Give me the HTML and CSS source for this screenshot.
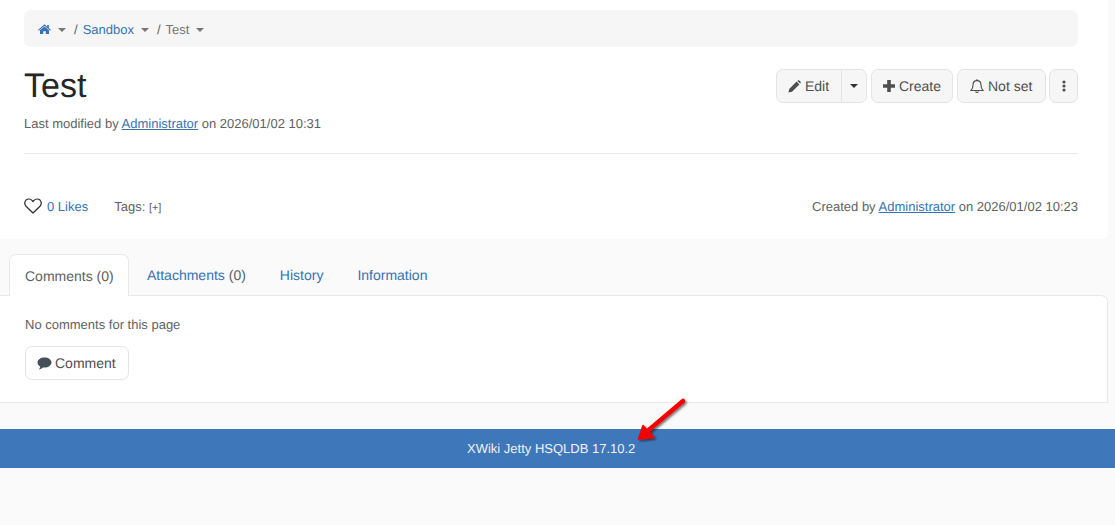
FILE: index.html
```html
<!DOCTYPE html>
<html lang="en">
<head>
<meta charset="utf-8">
<title>Test</title>
<link rel="stylesheet" href="styles.css">
</head>
<body>
<main class="page">
  <nav class="crumbs">
    <a class="crumb-link home" href="#"><svg class="home-icon" viewBox="0 0 13 10" width="13" height="10"><path d="M6.5 0.3 L9.2 2.7 V1 H10.8 V4.1 L13 6 L12.3 6.7 L6.5 1.8 L0.7 6.7 L0 6 Z M2 6.3 L6.5 2.6 L11 6.3 V10 H7.8 V7.2 H5.2 V10 H2 Z" fill="currentColor"/></svg></a>
    <span class="caret"></span><span class="sep">/</span>
    <a class="crumb-link" href="#">Sandbox</a>
    <span class="caret"></span><span class="sep">/</span>
    <span class="crumb-current">Test</span>
    <span class="caret"></span>
  </nav>
  <header class="title-row">
    <h1 class="title">Test</h1>
    <div class="actions">
      <div class="btn-group">
        <button class="btn btn-main"><svg class="icon" viewBox="0 0 13 13" width="13" height="13"><path d="M0.5 12.5 L1.2 9 L8.6 1.6 L11.4 4.4 L4 11.8 Z M9.4 0.9 L10.2 0.3 Q10.8 0 11.3 0.4 L12.6 1.7 Q13 2.2 12.7 2.8 L12.1 3.6 Z" fill="currentColor"/></svg>Edit</button>
        <button class="btn btn-split"><span class="caret dark"></span></button>
      </div>
      <button class="btn btn-create"><svg class="icon" viewBox="0 0 12 12" width="12" height="12"><path d="M4.2 0 H7.8 V4.2 H12 V7.8 H7.8 V12 H4.2 V7.8 H0 V4.2 H4.2 Z" fill="currentColor"/></svg>Create</button>
      <button class="btn btn-watch"><svg class="icon" viewBox="0 0 14 15" width="14" height="15"><path d="M1 11.5 C2.6 9.8 3 8.5 3 6 C3 3.4 4.8 1.6 7 1.6 C9.2 1.6 11 3.4 11 6 C11 8.5 11.4 9.8 13 11.5 Z M5.6 12.5 A1.5 1.5 0 0 0 8.4 12.5" fill="none" stroke="currentColor" stroke-width="1.1"/><circle cx="7" cy="1.2" r="0.9" fill="currentColor"/></svg>Not set</button>
      <button class="btn btn-more"><svg viewBox="0 0 4 12" width="4" height="12"><circle cx="2" cy="2" r="1.6" fill="currentColor"/><circle cx="2" cy="6" r="1.6" fill="currentColor"/><circle cx="2" cy="10" r="1.6" fill="currentColor"/></svg></button>
    </div>
  </header>
  <p class="meta">Last modified by <a href="#">Administrator</a> on 2026/01/02 10:31</p>
  <hr class="rule">
  <div class="info-row">
    <div class="likes">
      <svg class="heart" viewBox="0 0 18 16" width="18" height="16"><path d="M9 15 L2 8.2 C0.3 6.4 0.4 3.6 2 2.1 C3.7 0.6 6.4 0.7 8 2.4 L9 3.5 L10 2.4 C11.6 0.7 14.3 0.6 16 2.1 C17.6 3.6 17.7 6.4 16 8.2 Z" fill="none" stroke="currentColor" stroke-width="1.3" stroke-linejoin="round"/></svg>
      <a class="likes-link" href="#">0 Likes</a>
      <span class="tags">Tags: <small class="tags-add">[+]</small></span>
    </div>
    <p class="created">Created by <a href="#">Administrator</a> on 2026/01/02 10:23</p>
  </div>
</main>
<section class="lower">
  <ul class="tabs">
    <li class="tab active">Comments (0)</li>
    <li class="tab"><a href="#">Attachments</a> (0)</li>
    <li class="tab"><a href="#">History</a></li>
    <li class="tab"><a href="#">Information</a></li>
  </ul>
  <div class="tab-panel">
    <p class="empty">No comments for this page</p>
    <button class="btn btn-comment"><svg class="icon comment-icon" viewBox="0 0 15 13" width="15" height="13"><path d="M7.5 0.5 C11.4 0.5 14.5 2.6 14.5 5.5 C14.5 8.4 11.4 10.5 7.5 10.5 C6.9 10.5 6.4 10.5 5.9 10.4 C4.9 11.4 3.4 12.2 1.8 12.4 C2.6 11.6 3.2 10.6 3.2 9.6 C1.5 8.7 0.5 7.2 0.5 5.5 C0.5 2.6 3.6 0.5 7.5 0.5 Z" fill="currentColor"/></svg>Comment</button>
  </div>
</section>
<footer class="footer">XWiki Jetty HSQLDB 17.10.2</footer>
<svg class="arrow" viewBox="0 0 60 50" width="60" height="50">
  <defs><filter id="arrow-shadow" x="-20%" y="-20%" width="150%" height="150%"><feDropShadow dx="1.5" dy="1.5" stdDeviation="1.2" flood-color="#000" flood-opacity="0.55"/></filter></defs>
  <g filter="url(#arrow-shadow)">
    <path d="M48 5 L9 38" fill="none" stroke="#f40000" stroke-width="4.5" stroke-linecap="round"/>
    <path d="M3.5 43 L8 29.5 L19 41.5 Z" fill="#f40000" stroke="#f40000" stroke-width="1.5" stroke-linejoin="round"/>
  </g>
</svg>
</body>
</html>
```

FILE: styles.css
```css
* { box-sizing: border-box; }
html, body { margin: 0; padding: 0; }
body {
  position: relative;
  min-height: 525px;
  background: #fafafa;
  color: #616161;
  font: 14px/20px "Liberation Sans", Arial, sans-serif;
  text-rendering: geometricPrecision;
  overflow: hidden;
}
a { color: #3573b5; text-decoration: none; }
.page {
  width: 1108px;
  height: 239px;
  padding: 10px 30px 0 24px;
  background: #fff;
  border-bottom-right-radius: 7px;
}
.crumbs {
  display: flex;
  align-items: center;
  height: 37px;
  padding: 2px 0 0 14px;
  background: #f6f6f6;
  border-radius: 7px;
  font-size: 13px;
}
.home-icon { display: block; margin-top: -2px; }
.home { display: block; }
.caret {
  display: inline-block;
  width: 0;
  height: 0;
  margin-left: 7px;
  border-top: 4px solid #757575;
  border-left: 4px solid transparent;
  border-right: 4px solid transparent;
}
.caret.dark { margin: 0; border-top-color: #333; }
.sep { margin: 0 5px 0 8px; color: #616161; }
.crumb-current { color: #757575; }
.title-row {
  display: flex;
  justify-content: space-between;
  align-items: flex-start;
  margin-top: 22px;
  height: 34px;
}
.title {
  margin: -3px 0 0;
  color: #262626;
  font-size: 34px;
  font-weight: 400;
  line-height: 40px;
}
.actions { display: flex; gap: 4px; }
.btn {
  display: inline-flex;
  align-items: center;
  height: 34px;
  padding: 0 0 0 11px;
  background: #f6f6f6;
  border: 1px solid #e3e3e3;
  border-radius: 7px;
  color: #4f4f4f;
  font: 14px/20px "Liberation Sans", Arial, sans-serif;
  text-rendering: geometricPrecision;
}
.icon { margin-right: 4px; }
.btn-group { display: flex; }
.btn-main { width: 66px; border-radius: 7px 0 0 7px; }
.btn-split { width: 26px; margin-left: -1px; padding: 0; justify-content: center; border-radius: 0 7px 7px 0; }
.btn-create { width: 82px; }
.btn-watch { width: 89px; padding-left: 12px; }
.btn-more { width: 29px; margin-left: -1px; padding: 0; justify-content: center; }
.meta {
  margin: 11px 0 0;
  font-size: 13px;
  line-height: 20px;
}
.meta a, .created a { text-decoration: underline; }
.rule {
  margin: 19px 0 0;
  border: 0;
  border-top: 1px solid #e8e8e8;
}
.info-row {
  display: flex;
  justify-content: space-between;
  align-items: center;
  margin-top: 43px;
  height: 20px;
  font-size: 13px;
}
.likes { display: flex; align-items: center; }
.heart { margin-top: -2px; color: #333; }
.likes-link { margin-left: 5px; }
.tags { margin-left: 26px; }
.tags-add { font-size: 11px; }
.created { margin: 0; }
.lower { margin-top: 15px; }
.tabs {
  display: flex;
  margin: 0;
  padding: 0 0 0 9px;
  list-style: none;
  height: 42px;
  white-space: nowrap;
}
.tab {
  padding: 11px 16px 0 18px;
  height: 42px;
}
.tab.active {
  width: 120px;
  padding: 11px 15px 0;
  margin-right: 0;
  background: #fff;
  border: 1px solid #e8e8e8;
  border-bottom: 0;
  border-radius: 7px 7px 0 0;
  position: relative;
  z-index: 1;
}
.tab-panel {
  width: 1108px;
  height: 108px;
  margin-top: -1px;
  padding: 19px 0 0 25px;
  background: #fff;
  border: 1px solid #e8e8e8;
  border-left: 0;
  border-top-right-radius: 7px;
}
.empty { margin: 0; font-size: 13px; }
.btn-comment { width: 104px; margin-top: 11px; background: #fff; }
.comment-icon { margin-right: 3px; color: #46505a; }
.footer {
  margin-top: 26px;
  height: 39px;
  padding-left: 467px;
  background: #3e78bb;
  color: #f2f2f2;
  font-size: 13px;
  line-height: 39px;
}
.arrow { position: absolute; left: 635px; top: 396px; }
```
